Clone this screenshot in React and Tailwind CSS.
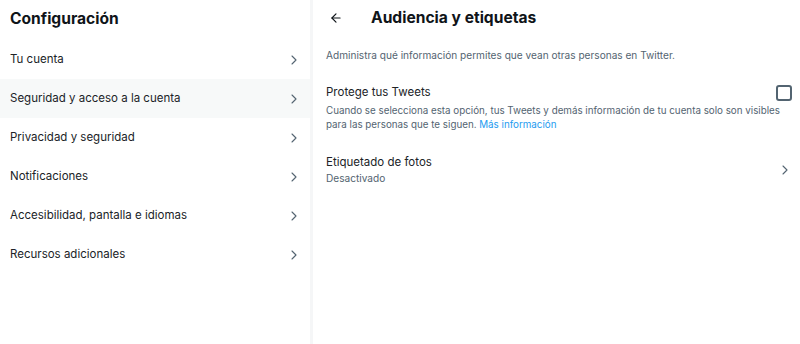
import { ArrowLeft, ChevronRight } from "lucide-react";

const items = [
  "Tu cuenta",
  "Seguridad y acceso a la cuenta",
  "Privacidad y seguridad",
  "Notificaciones",
  "Accesibilidad, pantalla e idiomas",
  "Recursos adicionales",
];

export default function App() {
  return (
    <div
      className="flex h-[344px] w-[800px] overflow-hidden bg-white text-[#0f1419]"
      style={{ fontFamily: "Inter, 'Noto Sans', sans-serif" }}
    >
      <div className="flex w-[313px] shrink-0 flex-col border-r-[3px] border-[#f5f6f7]">
        <div className="flex h-[40px] items-center px-[10px] pb-[3px]">
          <h1 className="text-[15.6px] font-bold">Configuración</h1>
        </div>
        {items.map((item, i) => (
          <div
            key={item}
            className={
              "flex h-[39px] items-center justify-between pl-[10px] pr-[8px] " +
              (i === 1 ? "bg-[#f7f9f9]" : "")
            }
          >
            <span className="text-[11.5px] text-[#202327]">{item}</span>
            <ChevronRight className="h-[16px] w-[16px] text-[#536471]" strokeWidth={1.6} />
          </div>
        ))}
      </div>

      <div className="flex flex-1 flex-col">
        <div className="flex h-[36px] items-center px-[16px]">
          <ArrowLeft className="h-[14px] w-[14px] text-[#0f1419]" strokeWidth={2} />
          <h2 className="ml-[28px] text-[15.6px] font-bold">Audiencia y etiquetas</h2>
        </div>

        <p className="mt-[12px] px-[13px] text-[10.1px] text-[#536471]">
          Administra qué información permites que vean otras personas en Twitter.
        </p>

        <div className="mt-[21px] flex flex-col pl-[13px] pr-[6px]">
          <div className="flex items-center justify-between pr-[2px]">
            <span className="text-[11.5px] leading-[17px] text-[#202327]">Protege tus Tweets</span>
            <div className="h-[16px] w-[16px] shrink-0 rounded-[3px] border-2 border-[#536471]" />
          </div>
          <p className="mt-[3px] text-[9.8px] leading-[14px] text-[#536471]">
            Cuando se selecciona esta opción, tus Tweets y demás información de tu cuenta solo son visibles
            para las personas que te siguen. <a className="text-[#1d9bf0]">Más información</a>
          </p>
        </div>

        <div className="mt-[22px] flex items-center justify-between pl-[13px] pr-[7px]">
          <div className="flex flex-col">
            <span className="text-[11.5px] leading-[17px] text-[#202327]">Etiquetado de fotos</span>
            <span className="text-[10.1px] leading-[14px] text-[#536471]">Desactivado</span>
          </div>
          <ChevronRight className="h-[16px] w-[16px] text-[#536471]" strokeWidth={1.6} />
        </div>
      </div>
    </div>
  );
}
